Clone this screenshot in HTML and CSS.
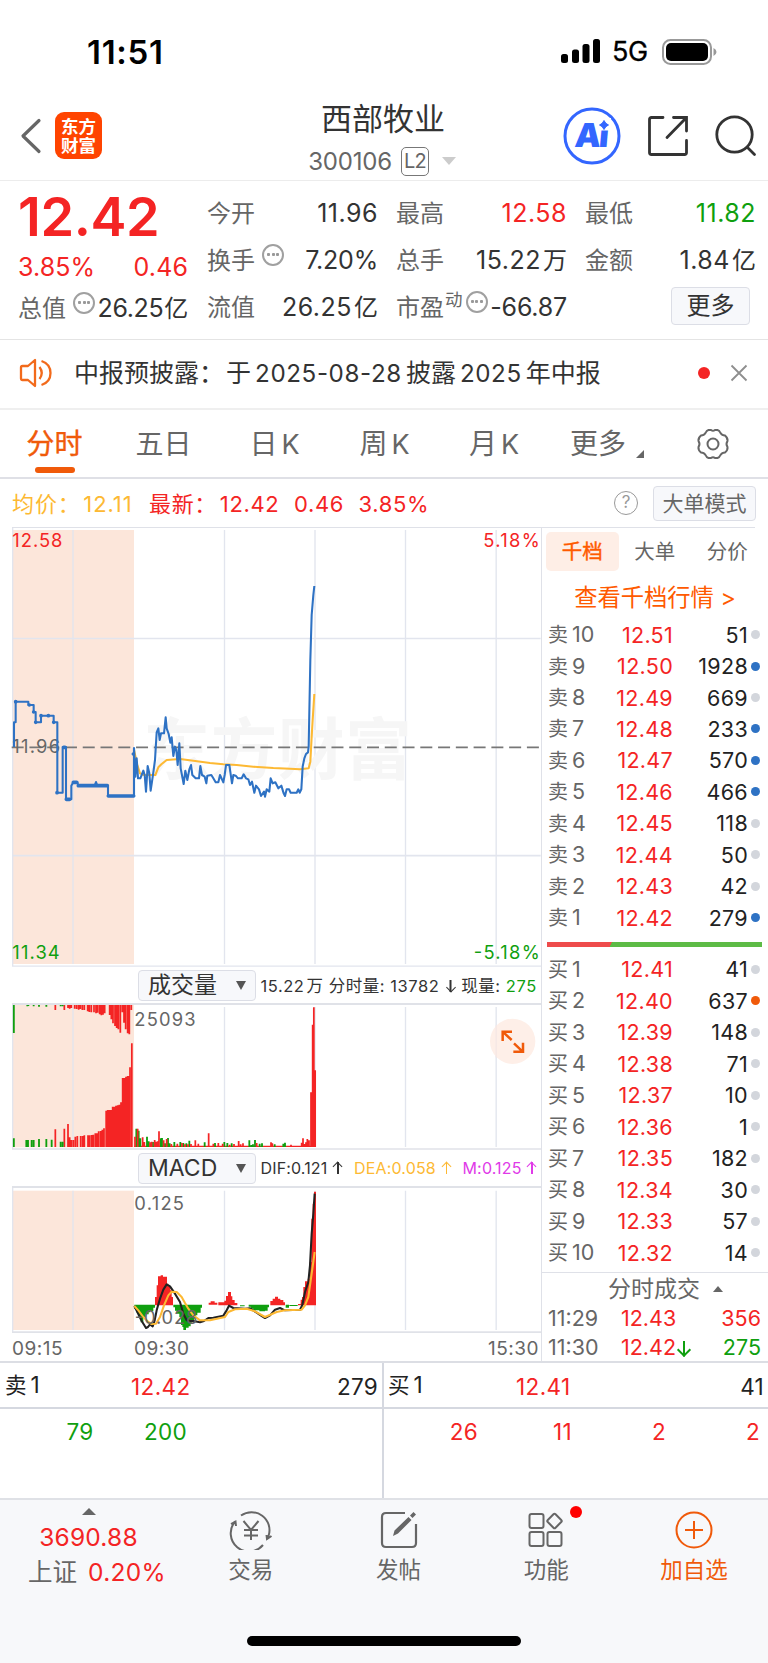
FILE: index.html
```html
<!DOCTYPE html>
<html lang="zh-CN">
<head>
<meta charset="utf-8">
<title>西部牧业 300106</title>
<link rel="stylesheet" href="styles.css">
</head>
<body>
<div class="phone">

<div class="status">
  <span class="clock">11:51</span>
  <div class="signal">
    <svg width="40" height="25" viewBox="0 0 40 25"><rect x="0" y="15" width="7" height="9" rx="2.5"/><rect x="11" y="10.500" width="7" height="13.500" rx="2.500"/><rect x="21.500" y="5" width="7" height="19" rx="2.500"/><rect x="32" y="0" width="7" height="24" rx="2.500"/></svg>
    <span class="net">5G</span>
    <svg width="56" height="28" viewBox="0 0 56 28"><rect x="1" y="2" width="48" height="24" rx="7.500" fill="none" stroke="#999" stroke-width="2"/><rect x="4" y="5" width="42" height="18" rx="5"/><path d="M51.500 10q3 1.500 3 4t-3 4z" fill="#999"/></svg>
  </div>
</div>

<header class="top">
  <svg class="back" width="22" height="36" viewBox="0 0 22 36"><path d="M19 2.500 3 18l16 15.500" fill="none" stroke="#666" stroke-width="3.200" stroke-linecap="round" stroke-linejoin="round"/></svg>
  <div class="brand"><span>东方</span><span>财富</span></div>
  <div class="title">
    <h1>西部牧业</h1>
    <div class="code"><span>300106</span><b>L2</b><i class="tri"></i></div>
  </div>
  <svg class="ai" width="58" height="58" viewBox="0 0 58 58"><circle cx="29" cy="29" r="27" fill="none" stroke="#36f" stroke-width="3"/><g transform="translate(29 39.500) skewX(-5)"><text class="aitext" x="-18" y="0" textLength="34">Ai</text></g><path d="M35 11h13v12.500H35z" fill="#fff"/><path d="M41 13.500q1.500 3.500 4.500 4.500-3 1-4.500 4.500-1.500-3.500-4.500-4.500 3-1 4.500-4.500z" fill="#36f" stroke="#36f" stroke-linejoin="round"/></svg>
  <svg class="share" width="42" height="42" viewBox="0 0 42 42"><path d="M16 2.500H4.500q-2 0-2 2v33q0 2 2 2h33q2 0 2-2V25.500M26.500 2.500h13V16M39 3 20 22.500" fill="none" stroke="#333" stroke-width="2.800" stroke-linecap="round"/></svg>
  <svg class="find" width="42" height="42" viewBox="0 0 42 42"><circle cx="19.500" cy="19.500" r="17.700" fill="none" stroke="#333" stroke-width="2.800"/><path d="m32.500 32.500 7 7" stroke="#333" stroke-width="2.800" stroke-linecap="round"/></svg>
</header>

<section class="quote">
  <div class="lead">
    <div class="price">12.42</div>
    <div class="pair red"><span>3.85%</span><span>0.46</span></div>
    <div class="pair cap"><span class="lab">总值</span><i class="more"></i><span class="val">26.25<em>亿</em></span></div>
  </div>
  <dl class="stats">
    <div><dt>今开</dt><dd>11.96</dd></div>
    <div><dt>最高</dt><dd class="red">12.58</dd></div>
    <div><dt>最低</dt><dd class="green">11.82</dd></div>
    <div><dt>换手</dt><i class="more"></i><dd class="t">7.20%</dd></div>
    <div><dt>总手</dt><dd>15.22<em>万</em></dd></div>
    <div><dt>金额</dt><dd>1.84<em>亿</em></dd></div>
    <div><dt>流值</dt><dd>26.25<em>亿</em></dd></div>
    <div><dt>市盈<sup>动</sup></dt><i class="more"></i><dd class="t">-66.87</dd></div>
    <div class="end"><button class="btn">更多</button></div>
  </dl>
</section>

<div class="notice">
  <svg width="34" height="30" viewBox="0 0 34 30"><path d="M2 9.500Q2 8 3.500 8H9l7-6v26l-7-6H3.500Q2 22 2 20.500zM20.500 9q4.500 6 0 12M22.500 3q9 3 9 12t-9 12" fill="none" stroke="#f26a1b" stroke-width="2.300" stroke-linejoin="round"/></svg>
  <p>中报预披露<span class="colon">：</span>于<em>2025-08-28</em>披露<em>2025</em>年中报</p>
  <i class="reddot"></i>
  <svg width="18" height="18" viewBox="0 0 18 18"><path d="m1.500 1.500 15 15m0-15-15 15" stroke="#8e8e8e" stroke-width="1.800"/></svg>
</div>

<nav class="tabs">
  <span class="on">分时</span><span>五日</span><span>日<em>K</em></span><span>周<em>K</em></span><span>月<em>K</em></span><span class="drop">更多</span>
  <svg width="34" height="34" viewBox="0 0 34 34"><path d="M12.500 3h2.500q2 1.500 4 0h2.500q2 .5 3 3 1.500 2.500 4.500 2.500 3 2.500 2.500 5.500-2 3 0 6 .5 3-2.500 5.500-3 0-4.500 2.500-1 2.500-3 3H19q-2-1.500-4 0h-2.500q-2-.5-3-3Q8 25.500 5 25.500 2 23 2.500 20q2-3 0-6Q2 11 5 8.500q3 0 4.500-2.500 1-2.500 3-3z" fill="none" stroke="#666" stroke-width="2"/><circle cx="17" cy="17" r="5.500" fill="none" stroke="#666" stroke-width="2"/></svg>
</nav>

<div class="infoline">
  <span class="avg">均价<span class="colon">：</span>12.11</span>
  <span class="last">最新<span class="colon">：</span>12.42<em>0.46</em><em>3.85%</em></span>
  <i class="help">?</i>
  <button class="mode">大单模式</button>
</div>

<main class="market">
<div class="charts">
  <svg class="plot" width="542" height="439" viewBox="0 24 1626 1317">
    <rect x="38" y="30" width="364" height="1302" fill="#fce6da"/>
    <g stroke="#e2e5ee" stroke-width="4" fill="none"><path d="M219 30v1302M673.500 30v1302M945 30v1302M1216.500 30v1302M1488.500 30v1302"/><path d="M38 355.500h1584M38 1007h1584" stroke-width="5"/><path d="M38 1338V24M36 1338.500h1588"/></g>
    <text class="mark" x="430" y="762" textLength="806">东方财富</text>
    <path d="M35 682h1587" stroke="#777" stroke-width="5" stroke-dasharray="36 17.300"/>
    <text class="ax" x="37" y="700" textLength="143">11.96</text>
    <path d="M402 690 412 735 420 760 432 765H466L475 742 485 732 500 720 540 717 580 722 630 729 670 733 710 735 760 740 820 744 870 746 900 748 926 745 931 725 935 650 938 600 943 522" class="ln" stroke="#fdb933"/>
    <path d="M42 681V607H47V545H85V555H101V576H107V607H123V587H161V607H172V818H188V681H198V838H214V797L220 786H232L235 797H284L288 786 292 797H324V828H402V684" class="ln" stroke="#2e72c4"/>
    <path d="M47 545h.1M88 555h.1M101 576h.1M107 607h.1M123 587h.1M145 587h.1M161 607h.1M171 818h.1M191 682h4M199 838h10M220 787h10M235 797h87M325 828h76M400 702h.1" stroke="#2e72c4" stroke-width="11" stroke-linecap="round"/>
    <path d="M402 828V684L406 770 410 715 414 775H421L425 765 430 752 434 765 438 815 443 738 448 760 452 812 456 785 460 757 465 720 470 637 475 625 479 660 483 640H492L497 592 500 625 506 642 511 668 515 652 520 708 525 680 529 690 533 735 538 670 542 745 551 792 556 752 562 780 568 748 573 735 577 765 587 775H597L601 738 606 765 614 770 619 790 622 767 634 765 640 775 647 787H655L660 765 670 787 674 765 678 735H688L696 790 700 765 707 767 714 775H725L731 763 738 775 745 778 750 795 756 785 763 818 768 797 777 808 783 828 792 815 795 830 800 808 808 815 812 775 818 790 826 787 835 805 844 797 851 820 855 828 860 808H867L872 818H890L895 808 899 818 904 808 908 740 913 715 918 702 924 697 926 680 931 420 935 285 940 225 943 198" class="ln" stroke="#2e72c4"/>
    <text class="ax r" x="37" y="80" textLength="150">12.58</text>
    <text class="ax r" x="1450" y="80" textLength="169">5.18%</text>
    <text class="ax g" x="37" y="1316" textLength="142">11.34</text>
    <text class="ax g" x="1421" y="1316" textLength="198">-5.18%</text>
  </svg>

  <div class="ind"><button>成交量<i></i></button><span class="cn">15.22<em>万</em> 分时量: 13782 <u class="ar dn"></u> 现量: <b class="green">275</b></span></div>

  <svg class="plot" width="542" height="145" viewBox="0 135 1626 435">
    <rect x="38" y="135" width="364" height="427" fill="#fce6da"/>
    <path d="M38 135V567M219 141v420M673.500 141v420M945 141v420M1216.500 141v420M1488.500 141v420" stroke="#e2e5ee" stroke-width="4"/>
    <path d="M36 567h1588" stroke="#e0e2e8" stroke-width="5"/>
    <path class="up" d="M166 135v15M193 135v15M204 135v9M209 135v11M214 135v9M224 135v11M230 135v12M236 135v14M241 135v12M247 135v15M253 135v15M263 135v19M268 135v21M274 135v22M282 135v22M288 135v25M293 135v23M299 135v28M304 135v31M309 135v29M314 135v25M329 135v30M334 135v43M339 135v55M345 135v63M350 135v69M355 135v73M361 135v83M367 135v22M372 135v53M377 135v73M383 135v85M388 135v88M394 135v15"/>
    <path class="up" d="M166 561V508M193 561V506M204 561V492M209 561V532M214 561V540M220 561V540M226 561V530M232 561V528M242 561V528M248 561V528M253 561V526M264 561V526M269 561V526M275 561V525M280 561V524M286 561V520M291 561V520M296 561V514M302 561V513M307 561V509M312 561V505M318.500 561V452M323 561V450M328 561V450M333 561V450M338 561V440M343 561V440M348 561V437M353 561V436M358 561V434M363 561V427M368 561V354M373 561V354M378 561V350M383 561V348M386 561V348M390 561V322M395.500 561V250"/>
    <path class="down" d="M41.500 135v84M82 135v4M85 135v3M101 135v4M117 135v5M139 135v5M182 135v4M188 135v4M41.500 561V535M79 561V540M84 561V540M95 561V540M101 561V540M117 561V537M139 561V537M155 561V539M182 561V545M188 561V545"/>
    <path d="M403 559h544" stroke="#f42424" stroke-width="4"/>
    <path class="down" d="M409 561V506M416 561V512M421 561V535M441 561V530M446 561V544M459 561V546M482 561V535M486 561V534M495 561V550M504 561V534M509 561V550M523 561V546M541 561V546M550 561V549M559 561V550M568 561V542M614 561V547M645 561V549M673 561V546M682 561V549M695 561V550M748 561V541M754 561V555M759 561V553M765 561V540M779 561V551M786 561V550M824 561V553M850 561V551M855 561V548"/>
    <path class="up" d="M405 561V530M413 561V506M428 561V532M433 561V546M450 561V547M455 561V545M464 561V540M468 561V545M473 561V544M477 561V514M491 561V541M500 561V537M514 561V552M532 561V551M546 561V549M555 561V553M564 561V553M573 561V552M586 561V541M595 561V551M626 561V520M640 561V551M655 561V549M668 561V551M689 561V554M702 561V552M716 561V543M722 561V553M729 561V550M770 561V549M813 561V547M817 561V550M873 561V554M905 561V548M909 561V535M913 561V552M918 561V547M922 561V537M927 561V541M933 561V397M938 561V194M941.500 561V142M945.500 561V331"/>
    <text class="ax" x="403" y="199" textLength="184">25093</text>
    <circle cx="1538" cy="244" r="68" fill="#feefe8"/><path d="M1488.500 196v96" stroke="#f1e4e4" stroke-width="3"/>
    <path d="M1535 240 1508 215M1508 243v-28h28M1542 250l26 25M1540 275h29v-27" fill="none" stroke="#f05a0a" stroke-width="7.500"/>
  </svg>

  <div class="ind mid"><button>MACD<i></i></button><span>DIF:0.121 <u class="ar"></u></span><span class="dea">DEA:0.058 <u class="ar"></u></span><span class="m">M:0.125 <u class="ar"></u></span></div>

  <svg class="plot" width="542" height="145" viewBox="0 113 1626 435">
    <rect x="38" y="121" width="364" height="418" fill="#fce6da"/>
    <path d="M38 113V545M219 121v418M673.500 121v418M945 121v418M1216.500 121v418M1488.500 121v418" stroke="#e2e5ee" stroke-width="4"/>
    <path d="M36 545.500h1588" stroke="#e0e2e8" stroke-width="5"/>
    <path d="M403 463H465V472H460V482H451V486H446V492H437V502H430V516H422V502H416V488H410V476H403zM520 463H606V472H602V487H592V495H587V502H582V514H576V517H572V528H566V532H558V539H550V530H547V524H543V500H538V490H530V481H525V471H520zM720 465h14v3h-14zM746 463H807V471H803V481H795V483H778V480H760V475H752V469H746zM857 463h10v9h-10zM868 464h25v3h-25z" fill="#0f9f0f"/>
    <path d="M465 465V440H470V405H474V378H482V375H489V379H501V400H505V408H511V420H515V440H519V465zM614 465v-2h12v-6h6v-4h12v4h8v6h-38zM655 465v-9h18v-5h5v-14h6v-12h9v13h4v11h7v9h8v7zM811 465v-13h7v-7h7v-6h9v6h7v4h9v7h5v9zM894 465v-4h8v-13h4V440h4V410h5V393h8V385h6V335h5V205h4V160h4V124h6V465z" fill="#f42424"/>
    <path d="M403 467 412 485 425 512 433 525 438 533 444 530 450 522 458 528 464 510 470 480 480 445 490 418 500 402 510 408 525 430 540 455 550 490 560 510 570 512 580 512 600 516 612 512 625 503 640 502 670 496 680 480 687 466 700 473 735 475 750 474 770 487 782 495 795 503 810 495 825 478 840 473 855 480 900 478 907 464 915 425 925 395 930 345 935 250 940 190 944 130" class="ln" stroke="#222"/>
    <path d="M403 467 415 480 430 500 445 515 455 521 468 520 480 500 492 465 505 435 515 424 530 425 545 440 555 458 565 475 580 495 600 510 630 510 675 500 685 485 705 477 740 475 765 483 795 500 830 485 855 480 905 478 915 465 925 440 935 370 944 305" class="ln" stroke="#fdb933"/>
    <text class="ax" x="404" y="520" textLength="188">-0.028</text>
    <text class="ax" x="403" y="178" textLength="149">0.125</text>
  </svg>
  <div class="times"><span>09:15</span><span>09:30</span><span>15:30</span></div>
</div>

<aside class="book">
  <div class="seg"><span class="on">千档</span><span>大单</span><span>分价</span></div>
  <a class="all">查看千档行情 &gt;</a>
  <ul>
    <li><span>卖<em>10</em></span><b>12.51</b><s>51</s><i></i></li>
    <li><span>卖<em>9</em></span><b>12.50</b><s>1928</s><i class="blue"></i></li>
    <li><span>卖<em>8</em></span><b>12.49</b><s>669</s><i></i></li>
    <li><span>卖<em>7</em></span><b>12.48</b><s>233</s><i class="blue"></i></li>
    <li><span>卖<em>6</em></span><b>12.47</b><s>570</s><i class="blue"></i></li>
    <li><span>卖<em>5</em></span><b>12.46</b><s>466</s><i class="blue"></i></li>
    <li><span>卖<em>4</em></span><b>12.45</b><s>118</s><i></i></li>
    <li><span>卖<em>3</em></span><b>12.44</b><s>50</s><i></i></li>
    <li><span>卖<em>2</em></span><b>12.43</b><s>42</s><i></i></li>
    <li><span>卖<em>1</em></span><b>12.42</b><s>279</s><i class="blue"></i></li>
  </ul>
  <div class="ratio"></div>
  <ul>
    <li><span>买<em>1</em></span><b>12.41</b><s>41</s><i></i></li>
    <li><span>买<em>2</em></span><b>12.40</b><s>637</s><i class="org"></i></li>
    <li><span>买<em>3</em></span><b>12.39</b><s>148</s><i></i></li>
    <li><span>买<em>4</em></span><b>12.38</b><s>71</s><i></i></li>
    <li><span>买<em>5</em></span><b>12.37</b><s>10</s><i></i></li>
    <li><span>买<em>6</em></span><b>12.36</b><s>1</s><i></i></li>
    <li><span>买<em>7</em></span><b>12.35</b><s>182</s><i></i></li>
    <li><span>买<em>8</em></span><b>12.34</b><s>30</s><i></i></li>
    <li><span>买<em>9</em></span><b>12.33</b><s>57</s><i></i></li>
    <li><span>买<em>10</em></span><b>12.32</b><s>14</s><i></i></li>
  </ul>
  <div class="deals">
    <h2>分时成交<i></i></h2>
    <div><span>11:29</span><b class="red">12.43</b><s class="red">356</s></div>
    <div><span>11:30</span><b class="red">12.42<u class="ar dn green"></u></b><s class="green">275</s></div>
  </div>
</aside>
</main>

<section class="level">
  <div class="side">
    <div class="best"><span>卖<em>1</em></span><b>12.42</b><s>279</s></div>
    <div class="queue green"><span>79</span><span>200</span></div>
  </div>
  <div class="side buy">
    <div class="best"><span>买<em>1</em></span><b>12.41</b><s>41</s></div>
    <div class="queue red"><span>26</span><span>11</span><span>2</span><span>2</span></div>
  </div>
</section>

<footer class="bar">
  <div class="index"><i></i><b>3690.88</b><p>上证<em>0.20%</em></p></div>
  <div class="item"><svg width="44" height="40" viewBox="0 0 44 40"><g fill="none" stroke="#666" stroke-width="2"><path d="M12 5.500A18 18 0 0 1 39.500 26l-.5 2.500M34 35A18 18 0 0 1 6 11.500M2 14l4.500-2.500.5 4.500M42.500 26 38 29l-.5-4M14.500 11l7.500 9 7.500-9M22 20v10M15 20h14M15 25.500h14"/></g></svg><span>交易</span></div>
  <div class="item"><svg width="40" height="40" viewBox="0 0 40 40"><path d="M26 3H7q-4 0-4 4v26q0 4 4 4h26q4 0 4-4V14" fill="none" stroke="#666" stroke-width="2.200"/><path d="m14 26 1.500-5.500L29.500 7l3 3-13.500 13.500zM31 5.500l3.500-3.500 2.500 2.500L33.500 8z" fill="#666"/></svg><span>发帖</span></div>
  <div class="item"><svg width="40" height="40" viewBox="0 0 40 40"><g fill="none" stroke="#666" stroke-width="2"><rect x="3.500" y="4" width="14" height="14" rx="2"/><rect x="3.500" y="22" width="14" height="14" rx="2"/><rect x="21.500" y="22" width="14" height="14" rx="2"/><rect x="23" y="5.500" width="11" height="11" rx="1.500" transform="rotate(45 28.500 11)"/></g></svg><span>功能</span><u class="badge"></u></div>
  <div class="item add"><svg width="40" height="40" viewBox="0 0 40 40"><g fill="none" stroke="#f05a0a" stroke-width="2"><circle cx="20" cy="20" r="17.500"/><path d="M20 11v18M11 20h18"/></g></svg><span>加自选</span></div>
  <div class="home"></div>
</footer>

</div>
</body>
</html>
```

FILE: styles.css
```css
* { box-sizing: border-box; margin: 0; padding: 0; }
body { background: #fff; color: #333; font-family: Inter, "Noto Sans CJK SC", sans-serif; }
i, em, s, u { font-style: normal; text-decoration: none; }
b { font-weight: 400; }
ul { list-style: none; }
button { font: inherit; color: #333; background: #f7f8fb; border: 1.500px solid #dcdee6; border-radius: 4px; }
.phone { width: 768px; height: 1663px; overflow: hidden; }
.red { color: #f42424; }
.green { color: #0f9f0f; }

.status { height: 96px; padding: 7px 50px 0 87px; display: flex; justify-content: space-between; align-items: center; }
.clock { font-size: 33px; font-weight: 600; color: #000; letter-spacing: .7px; }
.signal { display: flex; align-items: center; }
.net { font-size: 27px; font-weight: 400; color: #000; width: 49px; padding-left: 11px; letter-spacing: -.3px; margin-right: 12px; -webkit-text-stroke: .3px #000; }

.top { height: 84.500px; border-bottom: 1.500px solid #ececec; display: flex; align-items: center; padding: 0 11px 4px 20px; }
.brand { width: 47px; height: 47px; margin-left: 13px; border-radius: 9px; background: #ff4400; color: #fff; font-weight: 700; font-size: 17.500px; line-height: 19px; display: flex; flex-direction: column; align-items: center; justify-content: center; }
.title { width: 360px; margin-left: 101px; display: flex; flex-direction: column; align-items: center; padding-top: 7px; }
h1 { font-size: 31px; font-weight: 400; line-height: 37px; }
.code { display: flex; align-items: center; height: 34px; font-size: 24px; color: #666; letter-spacing: -.2px; margin: 7px 0 0 -2px; }
.code b { margin-left: 9px; width: 28px; height: 29px; border: 1.500px solid #777; border-radius: 5px; font-size: 20px; line-height: 27px; text-align: center; letter-spacing: -1px; }
.tri { border: 7px solid transparent; border-top: 8px solid #ccc; border-bottom: 0; margin-left: 13px; }
.ai { margin-left: auto; }
.aitext { font-size: 33px; font-weight: 900; fill: #36f; }
.share { margin-left: 26px; }
.find { margin-left: 26px; }

.quote { height: 159.500px; border-bottom: 1.500px solid #e4e4e4; padding: 9px 12px 0 18px; display: flex; gap: 19px; font-size: 25px; }
.lead { width: 170px; }
.price { font-size: 54px; font-weight: 600; line-height: 54px; color: #f42424; letter-spacing: -.4px; }
.pair { display: flex; justify-content: space-between; align-items: center; line-height: 47px; height: 47px; letter-spacing: .1px; }
.cap { height: 35px; letter-spacing: -.35px; justify-content: flex-start; }
.cap .more { margin-left: 7px; }
.cap .val { margin-left: auto; }
.lab, dt { color: #666; letter-spacing: 0; font-size: 24px; }
.stats { flex: 1; display: grid; grid-template-columns: 171px 171px 171px; grid-auto-rows: 47px; column-gap: 18px; line-height: 47px; }
.stats div { display: flex; align-items: center; }
.stats dd { margin-left: auto; letter-spacing: .5px; }
.stats .t { letter-spacing: -.2px; }
.stats em { margin-left: 2px; letter-spacing: 0; font-size: 24px; }
.cap em { font-size: 24px; margin-left: 1px; }
.more { width: 22px; height: 22px; border: 2px solid #a0a0a0; border-radius: 50%; margin: 0 0 11px 7px; position: relative; background: radial-gradient(circle, #999 1.300px, transparent 1.800px) center/5px 5px no-repeat, radial-gradient(circle, #999 1.300px, transparent 1.800px) 2px center/5px 5px no-repeat, radial-gradient(circle, #999 1.300px, transparent 1.800px) 11px center/5px 5px no-repeat; }
sup { font-size: 17.500px; line-height: 0; vertical-align: 10px; margin-left: 1px; }
.stats dt:has(sup) + i { margin-left: 3px; }
.stats .end { justify-content: flex-end; padding-right: 6px; }
.btn { width: 79px; height: 38px; line-height: 35px; font-size: 24px; margin-bottom: 3px; }

.notice { height: 69.500px; border-bottom: 2px solid #efefef; display: flex; align-items: center; padding: 0 20px 1px 19px; }
.notice p { flex: 1; margin-left: 21px; font-size: 25px; line-height: 36px; padding-top: 1px; white-space: nowrap; }
.notice em { margin: 0 4px; font-size: 24.200px; letter-spacing: .6px; }
.colon { display: inline-block; width: 1.080em; }
.reddot { width: 12px; height: 12px; border-radius: 50%; background: #f42424; margin-right: 20px; }

.tabs { height: 69px; border-bottom: 2px solid #dfe0e6; display: grid; grid-template-columns: 109px 109px 113px 107px 112px 96px 122px; align-items: center; justify-items: center; font-size: 28px; color: #666; }
.tabs svg { margin-left: 12px; }
.tabs span { line-height: 68px; position: relative; }
.tabs em { margin-left: 4px; font-size: 27px; }
.tabs .on { color: #f05a0a; -webkit-text-stroke: .4px #f05a0a; }
.tabs .on::after { content: ""; position: absolute; left: 9px; bottom: 5px; width: 40px; height: 6px; border-radius: 3px; background: #f05a0a; }
.drop::after { content: ""; position: absolute; right: -18px; bottom: 20px; border: 4px solid #666; border-top-color: transparent; border-left-color: transparent; }

.infoline { height: 49px; display: flex; align-items: center; padding: 0 12px 0 12px; font-size: 22px; white-space: nowrap; letter-spacing: .65px; }
.infoline > span { margin-top: -2px; }
.infoline .colon { width: 1.160em; }
.avg { color: #fdb933; width: 137px; letter-spacing: .9px; }
.last { color: #f42424; flex: 1; }
.last em { margin-left: 14.500px; }
.help { width: 24px; height: 24px; border: 1.800px solid #999; border-radius: 50%; color: #999; font-size: 17px; line-height: 21px; text-align: center; margin-right: 15px; letter-spacing: 0; }
.mode { width: 103px; height: 35px; font-size: 21px; line-height: 31px; color: #666; letter-spacing: 0; }

.market { display: flex; height: 835px; border-bottom: 2px solid #dcdee4; position: relative; }
.market::before { content: ""; position: absolute; left: 12px; top: -1px; width: 743px; height: 1.500px; background: #dfe1e8; }
.charts { width: 542px; border-right: 1.500px solid #dfe1e8; display: flex; flex-direction: column; }
.plot { display: block; flex: none; }
.ax { font-size: 55px; fill: #666; }
.ax.r { fill: #f42424; }
.ax.g { fill: #0f9f0f; }
.mark { font-size: 200px; font-weight: 700; fill: #f6f6f6; }
.ln { fill: none; stroke-width: 6.200; stroke-linejoin: round; }
.up { stroke: #f42424; stroke-width: 5.200; }
.down { stroke: #0f9f0f; stroke-width: 5.500; }
.ind { flex: none; height: 38.500px; border-bottom: 2px solid #e0e2e8; margin: 0 0 0 12px; padding: 1px 0 0 126px; display: flex; align-items: center; font-size: 16px; white-space: nowrap; letter-spacing: .15px; }
.ind.mid { height: 37.500px; }
.ind button { width: 118px; height: 31px; font-size: 23px; line-height: 27px; display: flex; align-items: center; justify-content: space-between; padding: 0 9px; margin-right: 4.500px; }
.ind button i { border: 5px solid transparent; border-top: 9px solid #555; border-bottom: 0; }
.ind .cn { font-size: 16.500px; letter-spacing: .55px; }
.ind .cn em { margin-left: 2px; }
.ind .dea { color: #fdb933; margin-left: 10.500px; }
.ind .m { color: #e03ae8; margin-left: 10.500px; }
.ar { display: inline-block; width: 1.500px; height: 12px; background: currentColor; position: relative; margin: 0 5px; }
.ar::before { content: ""; position: absolute; left: -3px; top: 1px; width: 6px; height: 6px; border: solid currentColor; border-width: 1.500px 0 0 1.500px; transform: rotate(45deg); }
.ind .m .ar { margin-right: 0; }
.dn { transform: rotate(180deg); }
.times { padding: 1px 2px 0 12px; display: flex; font-size: 19px; line-height: 29px; height: 27px; color: #666; letter-spacing: .5px; }
.times span:nth-child(1) { width: 122px; }
.times span:nth-child(3) { margin-left: auto; }

.book { flex: 1; padding-top: 4px; }
.seg { display: flex; padding-left: 4px; font-size: 20.500px; line-height: 39px; color: #666; }
.seg span { width: 72.500px; text-align: center; }
.seg .on { background: #feeee6; border-radius: 5px; color: #ff5a00; -webkit-text-stroke: .4px #ff5a00; }
.all { display: block; text-align: center; font-size: 23.300px; line-height: 54px; height: 48.400px; color: #ff5a00; }
.book li, .deals div { display: flex; align-items: center; height: 31.460px; padding-left: 6px; font-size: 21.500px; }
.book li span { width: 60px; color: #666; font-size: 20px; line-height: 30px; white-space: nowrap; }
.book li em { font-size: 21.500px; margin-left: 4px; }
.book li b { width: 65px; text-align: right; color: #f42424; letter-spacing: .3px; }
.book li s { width: 75px; text-align: right; color: #222; letter-spacing: .3px; }
.book li i { width: 9px; height: 9px; border-radius: 50%; background: #d3d6dc; margin-left: 3px; }
.book li i.blue { background: #2e72c4; }
.book li i.org { background: #f05a0a; }
.ratio { height: 5px; margin: 9px 6px 6.300px 5px; background: linear-gradient(120deg, #ee4b4b 0 30%, #5dbb46 30%); }
.deals { border-top: 1.500px solid #dfe1e8; margin-top: 4px; }
.deals h2 { font-size: 23px; font-weight: 400; line-height: 32px; height: 30.500px; color: #666; padding-left: 66px; }
.deals h2 i { display: inline-block; border: 5px solid transparent; border-bottom: 6px solid #666; border-top: 0; margin: 0 0 5px 13px; }
.deals div { height: 29px; }
.deals span { width: 73px; color: #666; }
.deals s { margin-left: auto; padding-right: 7px; }
.deals .ar { margin-left: 7px; width: 2px; height: 15px; vertical-align: -1px; }
.deals .ar::before { width: 8px; height: 8px; left: -4px; border-width: 2px 0 0 2px; }

.level { display: flex; height: 137px; border-bottom: 2px solid #dfe1e6; color: #222; }
.side { width: 382px; }
.side.buy { width: 386px; border-left: 2px solid #d5d8e0; }
.best { display: flex; align-items: center; height: 46px; border-bottom: 2px solid #d5d8e0; font-size: 22.500px; padding: 3px 4px 0 5px; }
.best span { width: 126px; font-size: 21.500px; line-height: 32px; margin-top: -2px; }
.best em { margin-left: 4px; font-size: 22.500px; }
.best b { color: #f42424; letter-spacing: .4px; }
.best s { margin-left: auto; letter-spacing: .3px; }
.buy .best { padding-left: 4px; }
.buy .best b { margin-left: 2px; }
.queue { display: flex; font-size: 22.500px; line-height: 46px; padding-right: 4px; letter-spacing: .3px; }
.queue span { width: 93.500px; text-align: right; }
.buy .queue span { width: 94px; }

.bar { height: 164px; background: #f7f8fa; display: grid; grid-template-columns: 177px repeat(4, 1fr); color: #666; position: relative; font-size: 22.500px; }
.index { display: flex; flex-direction: column; align-items: center; padding-top: 8px; color: #666; }
.index i { border: 7px solid transparent; border-bottom: 7px solid #666; border-top: 0; }
.index b { font-size: 24.500px; line-height: 45px; color: #f42424; letter-spacing: .2px; }
.index p { font-size: 24.500px; line-height: 24px; white-space: nowrap; padding-left: 17px; }
.index em { color: #f42424; margin-left: 11px; letter-spacing: .3px; }
.item { display: flex; flex-direction: column; align-items: center; padding-top: 10px; position: relative; }
.item span { line-height: 40px; }
.item.add { color: #f05a0a; }
.badge { position: absolute; left: 97px; top: 6px; width: 12px; height: 12px; border-radius: 50%; background: #f00; }
.home { position: absolute; left: 247px; top: 136px; width: 274px; height: 10px; border-radius: 5px; background: #000; }
```
